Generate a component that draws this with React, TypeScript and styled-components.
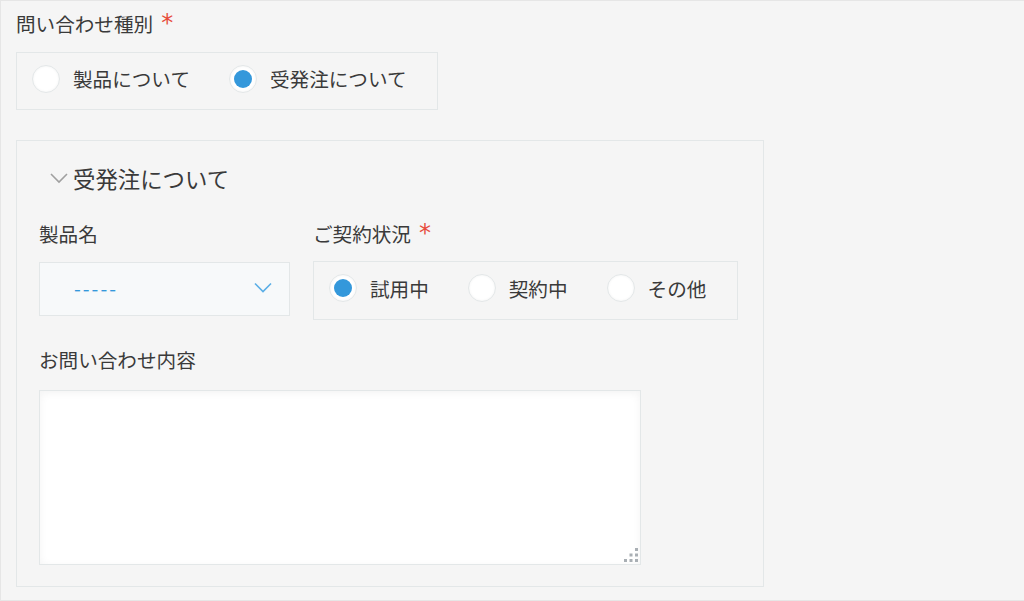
import React from "react";
import styled, { createGlobalStyle } from "styled-components";

const GlobalStyle = createGlobalStyle`
  html, body { margin: 0; padding: 0; background: #f5f5f5; }
  body {
    font-family: "Noto Sans CJK JP", "Noto Sans", sans-serif;
    color: #333;
  }
  * { box-sizing: border-box; }
`;

const Page = styled.div`
  width: 1024px;
  height: 601px;
  border-top: 1px solid #e6e6e6;
  border-left: 1px solid #e6e6e6;
  border-bottom: 1px solid #e6e6e6;
  padding: 11px 0 0 15px;
  overflow: hidden;
`;

const Label = styled.div`
  display: flex;
  align-items: center;
  font-size: 19.6px;
  line-height: 24px;
  height: 24px;
  color: #3a3a3a;
  white-space: nowrap;
`;

const Required = styled.span`
  color: #e74c3c;
  font-family: "DejaVu Sans", sans-serif;
  font-size: 24px;
  margin-left: 8px;
  position: relative;
  top: -1px;
`;

const RadioBox = styled.div<{ $width: number; $height: number; $top: number }>`
  display: flex;
  align-items: center;
  width: ${(p) => p.$width}px;
  height: ${(p) => p.$height}px;
  border: 1px solid #e3e7e8;
  padding: 0 0 5px 15px;
  margin-top: ${(p) => p.$top}px;
`;

const RadioItem = styled.label`
  display: flex;
  align-items: center;
  gap: 13px;
  margin-right: 39px;
  font-size: 19.6px;
  color: #3a3a3a;
  white-space: nowrap;
`;

const Circle = styled.span<{ $checked: boolean }>`
  width: 28px;
  height: 28px;
  border-radius: 50%;
  background: #fff;
  border: 1px solid #e3e7e8;
  box-shadow: inset 0 0 3px rgba(0, 0, 0, 0.06);
  display: flex;
  align-items: center;
  justify-content: center;
  flex: none;
  &::after {
    content: "";
    display: ${(p) => (p.$checked ? "block" : "none")};
    width: 18px;
    height: 18px;
    border-radius: 50%;
    background: #3498db;
  }
`;

const Group = styled.div`
  margin-top: 30px;
  width: 748px;
  height: 447px;
  border: 1px solid #e3e7e8;
  padding: 22px 0 0 22px;
`;

const GroupTitle = styled.div`
  display: flex;
  align-items: center;
  height: 30px;
  font-size: 22.4px;
  color: #3a3a3a;
  margin-left: 11px;
  gap: 5px;
`;

const FieldRow = styled.div`
  display: flex;
  align-items: flex-start;
  gap: 23px;
  margin-top: 29px;
`;

const Field = styled.div`
  display: flex;
  flex-direction: column;
`;

const Select = styled.div`
  margin-top: 16px;
  width: 251px;
  height: 54px;
  background: #f7f9fa;
  border: 1px solid #e3e7e8;
  display: flex;
  align-items: center;
  justify-content: space-between;
  padding: 0 17px 3px 34px;
  color: #3498db;
  font-size: 19.6px;
  letter-spacing: 2px;
`;

const TextLabel = styled(Label)`
  margin-top: 28px;
`;

const TextArea = styled.div`
  position: relative;
  margin-top: 18px;
  width: 602px;
  height: 175px;
  background: #fff;
  border: 1px solid #e3e7e8;
  box-shadow: inset 0 2px 8px rgba(0, 0, 0, 0.05);
`;

const Grip = styled.svg`
  position: absolute;
  right: 1px;
  bottom: 1px;
`;

const Radio = ({ label, checked }: { label: string; checked?: boolean }) => (
  <RadioItem>
    <Circle $checked={!!checked} />
    {label}
  </RadioItem>
);

export default function App() {
  return (
    <>
      <GlobalStyle />
      <Page>
        <Label>
          問い合わせ種別<Required>*</Required>
        </Label>
        <RadioBox $width={422} $height={58} $top={16}>
          <Radio label="製品について" />
          <Radio label="受発注について" checked />
        </RadioBox>
        <Group>
          <GroupTitle>
            <svg width="18" height="12" viewBox="0 0 18 12">
              <path d="M1 2 L9 10 L17 2" fill="none" stroke="#a0a0a0" strokeWidth="1.6" />
            </svg>
            受発注について
          </GroupTitle>
          <FieldRow>
            <Field>
              <Label>製品名</Label>
              <Select>
                <span>-----</span>
                <svg width="18" height="11" viewBox="0 0 18 11">
                  <path d="M1 1.5 L9 9.5 L17 1.5" fill="none" stroke="#5aaee6" strokeWidth="1.6" />
                </svg>
              </Select>
            </Field>
            <Field>
              <Label>
                ご契約状況<Required>*</Required>
              </Label>
              <RadioBox $width={425} $height={59} $top={15}>
                <Radio label="試用中" checked />
                <Radio label="契約中" />
                <Radio label="その他" />
              </RadioBox>
            </Field>
          </FieldRow>
          <TextLabel>お問い合わせ内容</TextLabel>
          <TextArea>
            <Grip width="16" height="16" viewBox="0 0 16 16">
              <g fill="#a9afb4">
                <rect x="12" y="1" width="3" height="3" />
                <rect x="6.5" y="6.5" width="3" height="3" />
                <rect x="12" y="6.5" width="3" height="3" />
                <rect x="1" y="12" width="3" height="3" />
                <rect x="6.5" y="12" width="3" height="3" />
                <rect x="12" y="12" width="3" height="3" />
              </g>
            </Grip>
          </TextArea>
        </Group>
      </Page>
    </>
  );
}
